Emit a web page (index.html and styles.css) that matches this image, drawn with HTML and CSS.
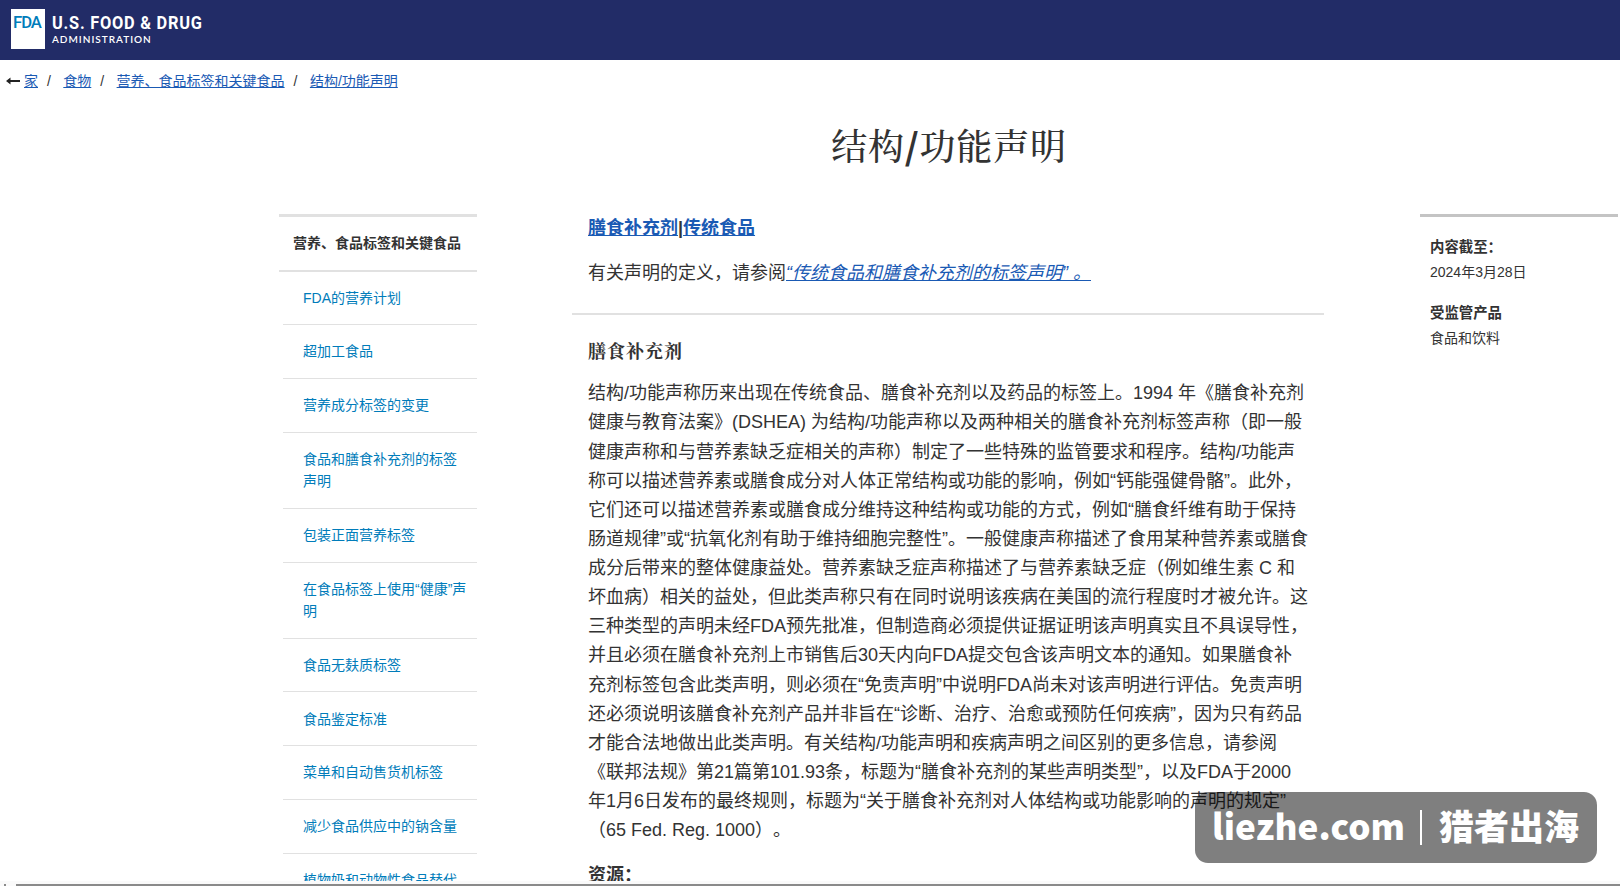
FILE: index.html
```html
<!DOCTYPE html>
<html lang="zh-CN">
<head>
    <meta charset="UTF-8">
    <meta name="viewport" content="width=device-width, initial-scale=1.0">
    <title>结构/功能声明 | FDA</title>
    <link rel="stylesheet" href="styles.css">
</head>
<body>
    <header class="site-header">
        <div class="logo-box"><span class="logo-mark">FDA</span></div>
        <div class="logo-text">
            <span class="logo-name">U.S. FOOD &amp; DRUG</span>
            <span class="logo-sub">ADMINISTRATION</span>
        </div>
    </header>

    <nav class="breadcrumb">
        <svg class="back-arrow" viewBox="0 0 14 8" width="14" height="8"><path d="M0 4L4.5 0.6V3H14V5H4.5V7.4Z" fill="#222"/></svg>
        <a href="#">家</a><span class="sep">/</span>
        <a href="#">食物</a><span class="sep">/</span>
        <a href="#">营养、食品标签和关键食品</a><span class="sep">/</span>
        <a href="#">结构/功能声明</a>
    </nav>

    <div class="layout">
        <aside class="side-nav">
            <h2>营养、食品标签和关键食品</h2>
            <ul>
                <li><a href="#">FDA的营养计划</a></li>
                <li><a href="#">超加工食品</a></li>
                <li><a href="#">营养成分标签的变更</a></li>
                <li><a href="#">食品和膳食补充剂的标签<br>声明</a></li>
                <li><a href="#">包装正面营养标签</a></li>
                <li><a href="#">在食品标签上使用“健康”声<br>明</a></li>
                <li><a href="#">食品无麸质标签</a></li>
                <li><a href="#">食品鉴定标准</a></li>
                <li><a href="#">菜单和自动售货机标签</a></li>
                <li><a href="#">减少食品供应中的钠含量</a></li>
                <li><a href="#">植物奶和动物性食品替代</a></li>
            </ul>
        </aside>

        <main class="content">
            <h1>结构<span class="slash">/</span>功能声明</h1>
            <p class="jump-links"><a href="#">膳食补充剂</a>|<a href="#">传统食品</a></p>
            <p class="definition">有关声明的定义，请参阅<a href="#"><em>“传统食品和膳食补充剂的标签声明” 。</em></a></p>
            <hr>
            <h3>膳食补充剂</h3>
            <p class="body-text">
                结构/功能声称历来出现在传统食品、膳食补充剂以及药品的标签上。1994 年《膳食补充剂<br>
                健康与教育法案》(DSHEA) 为结构/功能声称以及两种相关的膳食补充剂标签声称（即一般<br>
                健康声称和与营养素缺乏症相关的声称）制定了一些特殊的监管要求和程序。结构/功能声<br>
                称可以描述营养素或膳食成分对人体正常结构或功能的影响，例如“钙能强健骨骼”。此外，<br>
                它们还可以描述营养素或膳食成分维持这种结构或功能的方式，例如“膳食纤维有助于保持<br>
                肠道规律”或“抗氧化剂有助于维持细胞完整性”。一般健康声称描述了食用某种营养素或膳食<br>
                成分后带来的整体健康益处。营养素缺乏症声称描述了与营养素缺乏症（例如维生素 C 和<br>
                坏血病）相关的益处，但此类声称只有在同时说明该疾病在美国的流行程度时才被允许。这<br>
                三种类型的声明未经FDA预先批准，但制造商必须提供证据证明该声明真实且不具误导性，<br>
                并且必须在膳食补充剂上市销售后30天内向FDA提交包含该声明文本的通知。如果膳食补<br>
                充剂标签包含此类声明，则必须在“免责声明”中说明FDA尚未对该声明进行评估。免责声明<br>
                还必须说明该膳食补充剂产品并非旨在“诊断、治疗、治愈或预防任何疾病”，因为只有药品<br>
                才能合法地做出此类声明。有关结构/功能声明和疾病声明之间区别的更多信息，请参阅<br>
                《联邦法规》第21篇第101.93条，标题为“膳食补充剂的某些声明类型”，以及FDA于2000<br>
                年1月6日发布的最终规则，标题为“关于膳食补充剂对人体结构或功能影响的声明的规定”<br>
                （65 Fed. Reg. 1000）。
            </p>
            <p class="resources"><strong>资源：</strong></p>
        </main>

        <aside class="meta">
            <h2>内容截至：</h2>
            <p>2024年3月28日</p>
            <h2>受监管产品</h2>
            <p>食品和饮料</p>
        </aside>
    </div>

    <div class="watermark">
        <span class="wm-site">liezhe.com</span>
        <span class="wm-line"></span>
        <span class="wm-name">猎者出海</span>
    </div>
    <div class="bottom-bar"></div>
</body>
</html>
```
FILE: styles.css
```css
* {
    box-sizing: border-box;
}
body {
    margin: 0;
    height: 886px;
    overflow: hidden;
    background-color: #fff;
    color: #333;
    font-family: "Liberation Sans", "Noto Sans CJK SC", sans-serif;
    font-size: 18px;
    line-height: 29.12px;
}
h1, h2, h3, p, ul {
    margin: 0;
    padding: 0;
}
a {
    color: #1a5ab4;
}

/* header */
.site-header {
    display: flex;
    height: 60px;
    padding: 9px 11px;
    background-color: #222c67;
    color: #fff;
}
.logo-box {
    width: 34px;
    height: 40px;
    padding: 4px 0 0 2px;
    background-color: #fff;
}
.logo-mark {
    display: block;
    width: 34px;
    color: #007cba;
    font-family: Roboto, sans-serif;
    font-size: 16px;
    font-weight: 500;
    line-height: 20px;
    letter-spacing: -1px;
    transform: scaleX(1.04);
    transform-origin: left;
}
.logo-text {
    display: flex;
    flex-direction: column;
    margin-left: 7px;
    font-family: Roboto, sans-serif;
}
.logo-name {
    margin-top: 4px;
    font-size: 18.5px;
    font-weight: 700;
    line-height: 20px;
    letter-spacing: 0.85px;
    white-space: nowrap;
    transform: scaleX(0.885);
    transform-origin: left;
}
.logo-sub {
    margin-top: 1px;
    font-family: Lato, sans-serif;
    font-size: 10px;
    font-weight: 600;
    line-height: 10px;
    letter-spacing: 1px;
}

/* breadcrumb */
.breadcrumb {
    display: flex;
    align-items: center;
    height: 42px;
    padding-left: 6px;
    font-size: 14px;
    line-height: 22px;
}
.back-arrow {
    margin-right: 4px;
}
.sep {
    width: 25.3px;
    padding-left: 9px;
}

/* columns */
.layout {
    display: flex;
    height: 779px;
    padding-left: 279px;
    overflow: hidden;
}
.side-nav {
    width: 198px;
    margin-top: 112px;
    flex: none;
    border-top: 3px solid #e1e1e1;
    font-size: 14px;
    line-height: 22px;
}
.side-nav h2 {
    height: 54.5px;
    padding: 15px 0 0 14px;
    border-bottom: 2px solid #e1e1e1;
    font-size: 14px;
    white-space: nowrap;
}
.side-nav li {
    margin-left: 4px;
    padding: 15.1px 0 15.75px 20px;
    border-bottom: 1px solid #e1e1e1;
    list-style: none;
    white-space: nowrap;
}
.side-nav a {
    color: #007cba;
    text-decoration: none;
}
.content {
    width: 752px;
    margin-left: 95px;
    padding-left: 16px;
    flex: none;
    white-space: nowrap;
}
.content h1 {
    height: 52px;
    margin: 16px 0 0 -14px;
    font-family: "Noto Serif CJK SC", "Noto Sans CJK SC", serif;
    font-size: 36px;
    font-weight: 500;
    line-height: 52px;
    letter-spacing: 0.8px;
    text-align: center;
}
.content .slash {
    font-family: "Noto Sans CJK SC", sans-serif;
    font-weight: 700;
}
.jump-links {
    margin-top: 44px;
    font-weight: 700;
}
.definition {
    margin-top: 16px;
}
.content hr {
    height: 2px;
    margin: 25px 0 21px -16px;
    border: 0;
    background-color: #e1e1e1;
}
.content h3 {
    font-family: "Noto Serif CJK SC", "Noto Sans CJK SC", serif;
    font-size: 18px;
    font-weight: 700;
    line-height: 28px;
    letter-spacing: 1px;
}
.body-text {
    margin-top: 15px;
    text-spacing-trim: space-all;
}
.resources {
    margin-top: 16px;
}
.meta {
    width: 198px;
    height: 200px;
    margin: 112px 0 0 96px;
    padding: 18px 10px;
    flex: none;
    border-top: 3px solid #c4c4c4;
    font-size: 14px;
    line-height: 25px;
}
.meta h2 {
    font-size: 14.4px;
}
.meta p {
    margin-bottom: 16px;
}

/* overlay badge */
.watermark {
    position: absolute;
    left: 1195px;
    top: 792px;
    display: flex;
    align-items: center;
    width: 402px;
    height: 71px;
    padding-left: 17px;
    border-radius: 13px;
    background-color: rgba(0, 0, 0, 0.5);
    color: #fff;
    font-family: "Noto Sans CJK SC", sans-serif;
    font-size: 35px;
    font-weight: 900;
    line-height: 65px;
    white-space: nowrap;
}
.wm-site,
.wm-name {
    height: 71px;
}
.wm-site {
    width: 191px;
    letter-spacing: 0.1px;
}
.wm-line {
    width: 2px;
    height: 35px;
    margin: 0 17px;
    background-color: #fff;
}
.bottom-bar {
    height: 5px;
    background: linear-gradient(#8a8a8a, #8a8a8a) 16px 3px / 100% 2px no-repeat,
        linear-gradient(#8a8a8a, #8a8a8a) 4px 3px / 2px 2px no-repeat,
        #fafafa;
}
```
